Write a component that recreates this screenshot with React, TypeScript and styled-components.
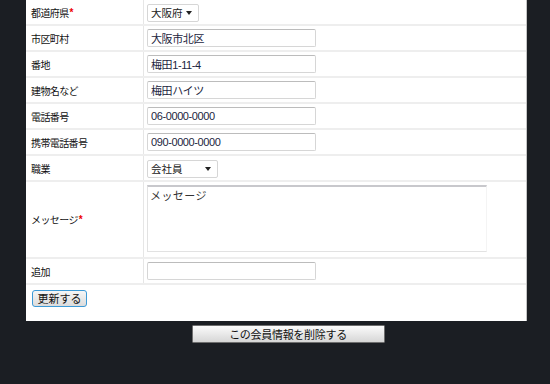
import React from 'react';
import styled, { createGlobalStyle } from 'styled-components';

const GlobalStyle = createGlobalStyle`
  html, body {
    margin: 0;
    padding: 0;
    background: #1b1e23;
  }
  body {
    width: 550px;
    height: 384px;
    overflow: hidden;
    font-family: "Liberation Sans", "Noto Sans CJK JP", sans-serif;
  }
`;

const Page = styled.div`
  padding-left: 26px;
  width: 524px;
`;

const Panel = styled.div`
  width: 500px;
  background: #ffffff;
  border-right: 1px solid #c4c4c4;
  padding-bottom: 14px;
`;

const Row = styled.div<{ $tall?: boolean }>`
  display: grid;
  grid-template-columns: 118px 1fr;
  min-height: ${(p) => (p.$tall ? '75px' : '24px')};
  border-bottom: 2px solid #eeeeee;
`;

const Label = styled.div`
  display: flex;
  align-items: center;
  padding-left: 5px;
  border-right: 1px solid #e6e6e6;
  font-size: 10px;
  letter-spacing: -0.6px;
  color: #111;
`;

const Required = styled.span`
  color: #ee0000;
  font-size: 10px;
  font-weight: bold;
  margin-left: 1px;
`;

const Field = styled.div<{ $top?: boolean }>`
  display: flex;
  align-items: ${(p) => (p.$top ? 'flex-start' : 'center')};
  padding-left: 3px;
  padding-top: ${(p) => (p.$top ? '3px' : '0')};
`;

const TextInput = styled.input`
  box-sizing: border-box;
  width: 169px;
  height: 18px;
  padding: 0 3px;
  border: 1px solid #d6d6d6;
  border-top-color: #bcbcbc;
  border-radius: 2px;
  font-family: "Liberation Sans", "Noto Sans CJK JP", sans-serif;
  font-size: 11px;
  letter-spacing: -0.4px;
  color: #1c2540;
  outline: none;
`;

const SelectWrap = styled.div<{ $w: number }>`
  position: relative;
  width: ${(p) => p.$w}px;
  height: 18px;

  &::after {
    content: '';
    position: absolute;
    right: 7px;
    top: 8px;
    border-left: 3.5px solid transparent;
    border-right: 3.5px solid transparent;
    border-top: 4px solid #222;
    pointer-events: none;
  }
`;

const Select = styled.select`
  appearance: none;
  box-sizing: border-box;
  width: 100%;
  height: 100%;
  padding: 0 0 0 3px;
  border: 1px solid #d6d6d6;
  border-radius: 2px;
  background: #fff;
  font-family: "Liberation Sans", "Noto Sans CJK JP", sans-serif;
  font-size: 10.5px;
  color: #222;
  outline: none;
`;

const TextArea = styled.textarea`
  box-sizing: border-box;
  width: 340px;
  height: 67px;
  padding: 0 2px;
  border: 1px solid #e2e2e2;
  border-top: 2px solid #c8c8cc;
  border-right-color: #f4f4f4;
  resize: none;
  font-family: "Noto Sans CJK JP", sans-serif;
  font-size: 11px;
  letter-spacing: 0.4px;
  color: #333;
  outline: none;
`;

const ButtonRow = styled.div`
  padding: 4px 0 0 6px;
`;

const UpdateButton = styled.button`
  box-sizing: border-box;
  width: 55px;
  height: 17px;
  padding: 0;
  border: 1px solid #3d9ad6;
  border-radius: 3px;
  background: linear-gradient(#f6f6f6, #dcdcdc);
  font-family: "Noto Sans CJK JP", sans-serif;
  font-size: 11px;
  line-height: 14px;
  color: #111;
`;

const Footer = styled.div`
  display: flex;
  justify-content: center;
  padding-top: 4px;
`;

const DeleteButton = styled.button`
  box-sizing: border-box;
  width: 193px;
  height: 18px;
  padding: 0;
  border: 1px solid #6e6e6e;
  border-radius: 1px;
  background: linear-gradient(#fbfbfb, #d6d6d6);
  font-family: "Noto Sans CJK JP", sans-serif;
  font-size: 11px;
  line-height: 15px;
  letter-spacing: -0.3px;
  color: #111;
`;

const textRows = [
  { label: '市区町村', value: '大阪市北区' },
  { label: '番地', value: '梅田1-11-4' },
  { label: '建物名など', value: '梅田ハイツ' },
  { label: '電話番号', value: '06-0000-0000' },
  { label: '携帯電話番号', value: '090-0000-0000' },
];

const App: React.FC = () => {
  return (
    <>
      <GlobalStyle />
      <Page>
        <Panel>
          <Row>
            <Label>
              都道府県<Required>*</Required>
            </Label>
            <Field>
              <SelectWrap $w={52}>
                <Select defaultValue="大阪府">
                  <option>大阪府</option>
                </Select>
              </SelectWrap>
            </Field>
          </Row>
          {textRows.map((r) => (
            <Row key={r.label}>
              <Label>{r.label}</Label>
              <Field>
                <TextInput defaultValue={r.value} />
              </Field>
            </Row>
          ))}
          <Row>
            <Label>職業</Label>
            <Field>
              <SelectWrap $w={71}>
                <Select defaultValue="会社員">
                  <option>会社員</option>
                </Select>
              </SelectWrap>
            </Field>
          </Row>
          <Row $tall>
            <Label>
              メッセージ<Required>*</Required>
            </Label>
            <Field $top>
              <TextArea defaultValue="メッセージ" />
            </Field>
          </Row>
          <Row>
            <Label>追加</Label>
            <Field>
              <TextInput defaultValue="" />
            </Field>
          </Row>
          <ButtonRow>
            <UpdateButton>更新する</UpdateButton>
          </ButtonRow>
        </Panel>
        <Footer>
          <DeleteButton>この会員情報を削除する</DeleteButton>
        </Footer>
      </Page>
    </>
  );
};

export default App;
